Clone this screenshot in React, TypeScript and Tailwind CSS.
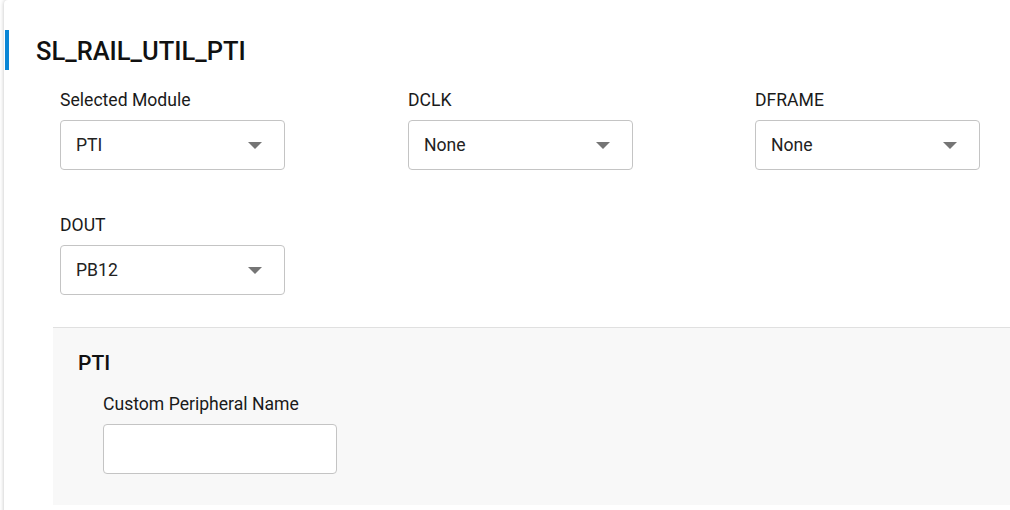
import React from "react";

function Caret() {
  return (
    <svg width="14" height="7" viewBox="0 0 10 5" className="shrink-0">
      <path d="M0 0 L5 5 L10 0 Z" fill="#757575" />
    </svg>
  );
}

function SelectField({ label, value }: { label: string; value: string }) {
  return (
    <div className="flex flex-col">
      <div className="text-[17.6px] leading-[21px] text-[#1a1a1a] mb-[9px]">{label}</div>
      <div className="w-[225px] h-[50px] border border-[#c4c4c4] rounded-[4px] bg-white flex items-center justify-between pl-[15px] pr-[22px]">
        <span className="text-[17.6px] text-[#222]">{value}</span>
        <Caret />
      </div>
    </div>
  );
}

export default function App() {
  return (
    <div className="w-[1010px] h-[510px] bg-white overflow-hidden" style={{ fontFamily: "Roboto, 'Liberation Sans', sans-serif" }}>
      <div className="ml-[4px] w-[1030px] h-[530px] bg-white rounded-[4px] shadow-[0_0_4px_rgba(0,0,0,0.25)] relative">
        <div className="absolute left-[1px] top-[30px] w-[4px] h-[40px] bg-[#0a86d6]" />
        <div className="pt-[36px] pl-[32px] text-[25.5px] leading-[30px] font-medium text-[#111]">SL_RAIL_UTIL_PTI</div>
        <div className="pl-[56px] pt-[24px] grid grid-cols-[348px_347px_225px] gap-y-[45px]">
          <SelectField label="Selected Module" value="PTI" />
          <SelectField label="DCLK" value="None" />
          <SelectField label="DFRAME" value="None" />
          <SelectField label="DOUT" value="PB12" />
        </div>
        <div className="ml-[49px] mt-[32px] h-[178px] bg-[#f8f8f8] border-t border-[#e0e0e0] pl-[25px] pt-[23px]">
          <div className="text-[21px] leading-[25px] font-medium text-[#111]">PTI</div>
          <div className="pl-[25px] pt-[18px]">
            <div className="text-[17.6px] leading-[21px] text-[#1a1a1a] mb-[9px]">Custom Peripheral Name</div>
            <div className="w-[234px] h-[50px] border border-[#c4c4c4] rounded-[4px] bg-white" />
          </div>
        </div>
      </div>
    </div>
  );
}
